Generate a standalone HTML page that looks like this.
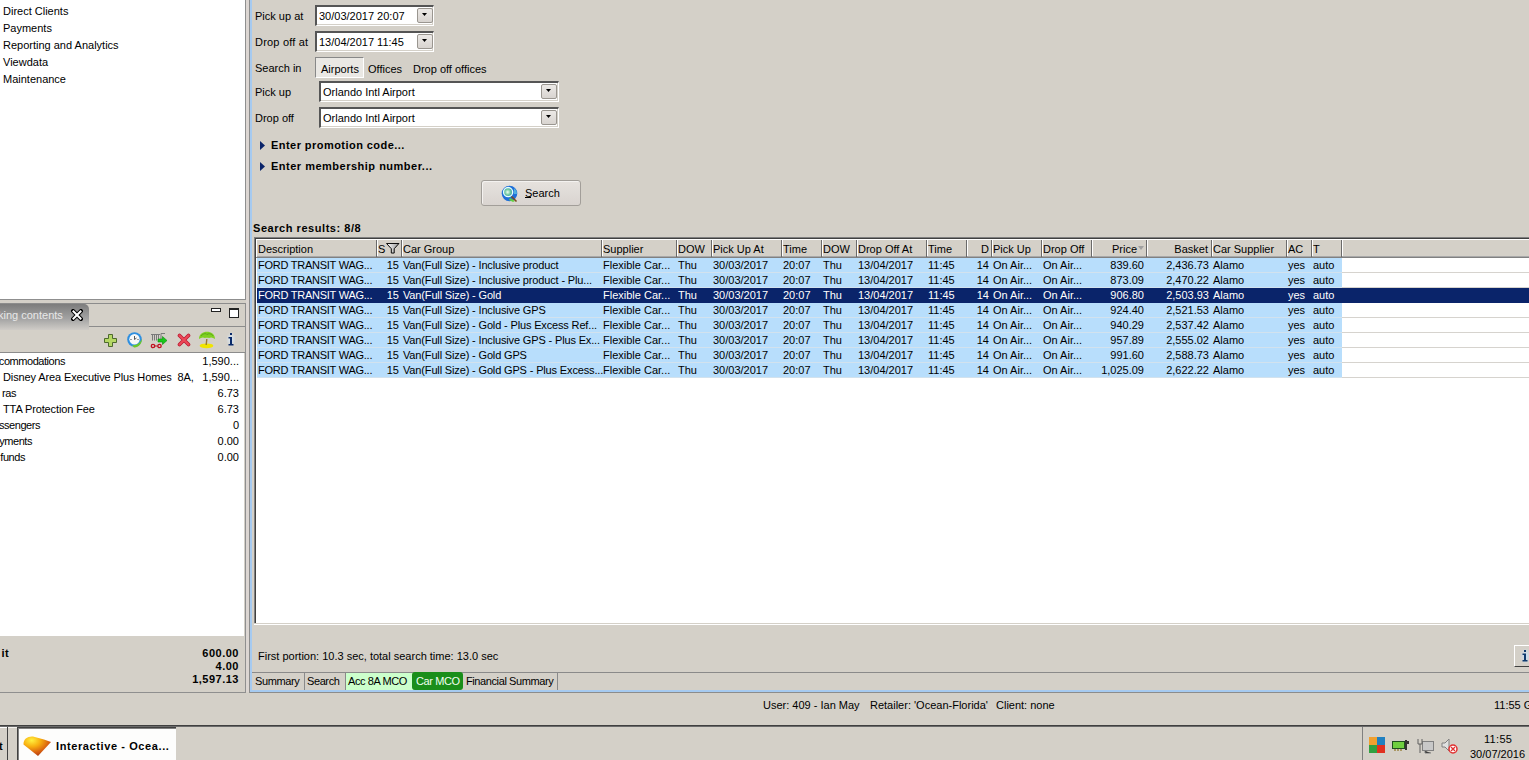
<!DOCTYPE html><html><head><meta charset="utf-8"><style>
*{margin:0;padding:0;box-sizing:border-box}
html,body{width:1529px;height:760px;overflow:hidden;background:#D4D0C8;font-family:"Liberation Sans",sans-serif;font-size:11px;color:#000}
.r{position:absolute}
.t{position:absolute;line-height:13px;white-space:pre;font-size:11px}
.b{font-weight:bold;letter-spacing:0.35px}
</style></head><body><div class="r" style="left:0px;top:0px;width:245px;height:299px;background:#fff"></div>
<div class="r" style="left:245px;top:0px;width:1px;height:300px;background:#8f8f8f"></div>
<div class="r" style="left:0px;top:299px;width:245px;height:1px;background:#8f8f8f"></div>
<div class="r" style="left:246px;top:0px;width:3px;height:692px;background:#DCD6D2"></div>
<div class="t " style="left:3px;top:5px;">Direct Clients</div>
<div class="t " style="left:3px;top:22px;">Payments</div>
<div class="t " style="left:3px;top:39px;">Reporting and Analytics</div>
<div class="t " style="left:3px;top:56px;">Viewdata</div>
<div class="t " style="left:3px;top:73px;">Maintenance</div>
<div class="r" style="left:0px;top:303px;width:245px;height:390px;background:#D4D0C8"></div>
<div class="r" style="left:0px;top:303px;width:245px;height:1px;background:#8c8c8c"></div>
<div class="r" style="left:245px;top:303px;width:1px;height:390px;background:#8f8f8f"></div>
<div class="r" style="left:0px;top:692px;width:246px;height:1px;background:#8f8f8f"></div>
<div class="r" style="left:0px;top:304px;width:89px;height:26px;background:linear-gradient(#7c7c7c,#a2a2a2 55%,#cfccc7);border-top-right-radius:5px"></div>
<div class="t " style="left:-2px;top:309px;color:#e8e8e8">king contents</div>
<svg class="r" style="left:71px;top:309px" width="12" height="12" viewBox="0 0 12 12"><path d="M2 2L10 10M10 2L2 10" stroke="#000" stroke-width="4" stroke-linecap="square"/><path d="M2.5 2.5L9.5 9.5M9.5 2.5L2.5 9.5" stroke="#fff" stroke-width="2" stroke-linecap="square"/></svg>
<div class="r" style="left:89px;top:326px;width:156px;height:1px;background:#8c8c8c"></div>
<div class="r" style="left:89px;top:326px;width:0px;height:0px;"></div>
<div class="r" style="left:211px;top:308px;width:10px;height:4px;border:1px solid #222;background:#fff"></div>
<div class="r" style="left:229px;top:308px;width:10px;height:10px;border:1px solid #222;border-top-width:2px;background:#fff"></div>
<div class="r" style="left:0px;top:352px;width:245px;height:1px;background:#8c8c8c"></div>
<svg class="r" style="left:104px;top:333px" width="14" height="14" viewBox="0 0 14 14"><path d="M4.5 1.5h4v4h4v4h-4v4h-4v-4h-4v-4h4z" fill="#B5D865" stroke="#4E6A2E" stroke-width="1"/></svg>
<svg class="r" style="left:126px;top:331px" width="18" height="18" viewBox="0 0 18 18"><circle cx="8.5" cy="8.5" r="7.3" fill="#2E8FE0"/><circle cx="8.5" cy="8.3" r="5.2" fill="#F8F8F8"/><path d="M8.5 5V8.5L10.5 7" stroke="#555" stroke-width="1" fill="none"/><circle cx="5" cy="8.5" r="0.6" fill="#333"/><circle cx="12" cy="8.5" r="0.6" fill="#333"/><path d="M6 14C10 15 14 12 16 8C16 13 12 17 8 16.5z" fill="#6CC828"/></svg>
<svg class="r" style="left:150px;top:331px" width="18" height="18" viewBox="0 0 18 18"><path d="M1 3.5h9M2.5 3.5v6M4.5 3.5v6M6.5 3.5v6M8.5 3.5v5M11 2.5h4M11 2.5v6" stroke="#7a7a7a" stroke-width="1" fill="none"/><circle cx="3" cy="15" r="1.7" fill="none" stroke="#C01020" stroke-width="1.3"/><circle cx="9.5" cy="15" r="1.7" fill="none" stroke="#C01020" stroke-width="1.3"/><path d="M4.7 15h3" stroke="#C01020"/><path d="M8 8h4.5V5.5l4.5 4-4.5 4V11H8z" fill="#18C818" stroke="#0a8a0a" stroke-width="0.6"/></svg>
<svg class="r" style="left:177px;top:333px" width="14" height="14" viewBox="0 0 14 14"><path d="M2.5 2.5L11.5 11.5M11.5 2.5L2.5 11.5" stroke="#B81830" stroke-width="3.6" stroke-linecap="round"/><path d="M2.5 2.5L11.5 11.5M11.5 2.5L2.5 11.5" stroke="#EC4858" stroke-width="2.2" stroke-linecap="round"/></svg>
<svg class="r" style="left:198px;top:331px" width="18" height="18" viewBox="0 0 18 18"><ellipse cx="8.5" cy="14.8" rx="6.8" ry="2.4" fill="#F0E400"/><path d="M8.8 8L8.2 14" stroke="#9A7A30" stroke-width="1.4"/><path d="M1 8C1 3 5 0.8 9 0.8C13 0.8 17 3 17 8C15 6.5 13 6 11 7C10 6.5 8 6.5 7 7C5 6 3 6.5 1 8z" fill="#80D020"/><path d="M3 5C5 2.5 8 2 9 3.5C11 2 14 3 15 5" stroke="#58A818" stroke-width="1" fill="none"/></svg>
<div class="r" style="left:226px;top:332px;width:10px;height:15px;background:radial-gradient(#D8E8F8,transparent 70%)"></div>
<svg class="r" style="left:228px;top:333px" width="6" height="13" viewBox="0 0 6 13"><rect x="2" y="0" width="2" height="2" fill="#0A2A6A"/><path d="M0.5 4h3.5v7h1.5v1.5h-5V11h1.5V5.5h-1.5z" fill="#0A2A6A"/></svg>
<div class="r" style="left:0px;top:353px;width:244px;height:283px;background:#fff"></div>
<div class="t " style="left:-135px;top:355px;width:200px;text-align:right;letter-spacing:-0.45px">ccommodations</div>
<div class="t " style="left:150px;top:355px;width:89px;text-align:right;">1,590...</div>
<div class="t " style="left:3px;top:371px;letter-spacing:-0.12px">Disney Area Executive Plus Homes  8A,</div>
<div class="t " style="left:150px;top:371px;width:89px;text-align:right;">1,590...</div>
<div class="t " style="left:-184px;top:387px;width:200px;text-align:right;letter-spacing:-0.45px">ras</div>
<div class="t " style="left:150px;top:387px;width:89px;text-align:right;">6.73</div>
<div class="t " style="left:3px;top:403px;letter-spacing:-0.12px">TTA Protection Fee</div>
<div class="t " style="left:150px;top:403px;width:89px;text-align:right;">6.73</div>
<div class="t " style="left:-160px;top:419px;width:200px;text-align:right;letter-spacing:-0.45px">ssengers</div>
<div class="t " style="left:150px;top:419px;width:89px;text-align:right;">0</div>
<div class="t " style="left:-168px;top:435px;width:200px;text-align:right;letter-spacing:-0.45px">yments</div>
<div class="t " style="left:150px;top:435px;width:89px;text-align:right;">0.00</div>
<div class="t " style="left:-175px;top:451px;width:200px;text-align:right;letter-spacing:-0.45px">funds</div>
<div class="t " style="left:150px;top:451px;width:89px;text-align:right;">0.00</div>
<div class="t b" style="left:-191px;top:647px;width:200px;text-align:right;">it</div>
<div class="t b" style="left:150px;top:647px;width:89px;text-align:right;letter-spacing:0.5px">600.00</div>
<div class="t b" style="left:150px;top:660px;width:89px;text-align:right;letter-spacing:0.5px">4.00</div>
<div class="t b" style="left:150px;top:673px;width:89px;text-align:right;letter-spacing:0.5px">1,597.13</div>
<div class="r" style="left:249px;top:0px;width:1px;height:693px;background:#8c8c8c"></div>
<div class="r" style="left:250px;top:0px;width:2px;height:692px;background:#A6CAF0"></div>
<div class="r" style="left:250px;top:690px;width:1279px;height:2px;background:#A6CAF0"></div>
<div class="r" style="left:249px;top:692px;width:1280px;height:1px;background:#8c8c8c"></div>
<div class="t " style="left:255px;top:10px;">Pick up at</div>
<div class="r" style="left:315px;top:5px;width:119px;height:21px;background:#fff;border-top:2px solid #555;border-left:2px solid #555;border-bottom:1px solid #fff;border-right:1px solid #fff;box-shadow:inset -1px -1px 0 #D4D0C8"></div>
<div class="t " style="left:319px;top:10px;">30/03/2017 20:07</div>
<div class="r" style="left:417px;top:8px;width:16px;height:15px;background:linear-gradient(#ECE9E6,#D8D4D0);border:1px solid #9a9690;border-radius:2px"></div>
<svg class="r" style="left:422px;top:13px" width="5" height="3" viewBox="0 0 5 3"><path d="M0 0h5L2.5 3z" fill="#000"/></svg>
<div class="t " style="left:255px;top:36px;letter-spacing:0.2px">Drop off at</div>
<div class="r" style="left:315px;top:31px;width:119px;height:21px;background:#fff;border-top:2px solid #555;border-left:2px solid #555;border-bottom:1px solid #fff;border-right:1px solid #fff;box-shadow:inset -1px -1px 0 #D4D0C8"></div>
<div class="t " style="left:319px;top:36px;">13/04/2017 11:45</div>
<div class="r" style="left:417px;top:34px;width:16px;height:15px;background:linear-gradient(#ECE9E6,#D8D4D0);border:1px solid #9a9690;border-radius:2px"></div>
<svg class="r" style="left:422px;top:39px" width="5" height="3" viewBox="0 0 5 3"><path d="M0 0h5L2.5 3z" fill="#000"/></svg>
<div class="t " style="left:255px;top:62px;">Search in</div>
<div class="r" style="left:315px;top:57px;width:49px;height:21px;background:#EAE8E4;border-top:1px solid #888;border-left:1px solid #888;border-bottom:1px solid #fff;border-right:1px solid #fff"></div>
<div class="t " style="left:321px;top:63px;">Airports</div>
<div class="t " style="left:368px;top:63px;">Offices</div>
<div class="t " style="left:413px;top:63px;">Drop off offices</div>
<div class="t " style="left:255px;top:86px;">Pick up</div>
<div class="r" style="left:319px;top:81px;width:240px;height:21px;background:#fff;border-top:2px solid #555;border-left:2px solid #555;border-bottom:1px solid #fff;border-right:1px solid #fff;box-shadow:inset -1px -1px 0 #D4D0C8"></div>
<div class="t " style="left:323px;top:86px;">Orlando Intl Airport</div>
<div class="r" style="left:541px;top:84px;width:16px;height:15px;background:linear-gradient(#ECE9E6,#D8D4D0);border:1px solid #9a9690;border-radius:2px"></div>
<svg class="r" style="left:546px;top:89px" width="5" height="3" viewBox="0 0 5 3"><path d="M0 0h5L2.5 3z" fill="#000"/></svg>
<div class="t " style="left:255px;top:112px;">Drop off</div>
<div class="r" style="left:319px;top:107px;width:240px;height:21px;background:#fff;border-top:2px solid #555;border-left:2px solid #555;border-bottom:1px solid #fff;border-right:1px solid #fff;box-shadow:inset -1px -1px 0 #D4D0C8"></div>
<div class="t " style="left:323px;top:112px;">Orlando Intl Airport</div>
<div class="r" style="left:541px;top:110px;width:16px;height:15px;background:linear-gradient(#ECE9E6,#D8D4D0);border:1px solid #9a9690;border-radius:2px"></div>
<svg class="r" style="left:546px;top:115px" width="5" height="3" viewBox="0 0 5 3"><path d="M0 0h5L2.5 3z" fill="#000"/></svg>
<svg class="r" style="left:260px;top:141px" width="5" height="9" viewBox="0 0 5 9"><path d="M0 0L5 4.5L0 9z" fill="#0A246A"/></svg>
<div class="t b" style="left:271px;top:139px;letter-spacing:0.45px">Enter promotion code...</div>
<svg class="r" style="left:260px;top:162px" width="5" height="9" viewBox="0 0 5 9"><path d="M0 0L5 4.5L0 9z" fill="#0A246A"/></svg>
<div class="t b" style="left:271px;top:160px;letter-spacing:0.5px">Enter membership number...</div>
<div class="r" style="left:481px;top:180px;width:100px;height:26px;background:linear-gradient(#E6E2DE,#D9D4D0);border:1px solid #A29E99;border-radius:3px;box-shadow:inset 1px 1px 0 #F4F2F0"></div>
<svg class="r" style="left:498px;top:182px" width="24" height="24" viewBox="0 0 24 24"><defs><radialGradient id="gl" cx="0.45" cy="0.5" r="0.6"><stop offset="0" stop-color="#f0fff0"/><stop offset="0.5" stop-color="#70c8a0"/><stop offset="1" stop-color="#2a90b0"/></radialGradient></defs><circle cx="11.5" cy="11.5" r="7.8" fill="#1f6fd8"/><path d="M16 6A7.8 7.8 0 0 1 19 12L16 12z" fill="#50b0e0"/><path d="M12 16L17 19L15 20L11 18z" fill="#60d040"/><circle cx="10.1" cy="10.1" r="4.6" fill="url(#gl)" stroke="#e8ffff" stroke-width="1.3"/><path d="M13.5 14.5L18.5 19.5" stroke="#7a4a20" stroke-width="1.6"/></svg>
<div class="t " style="left:525px;top:187px;">Search</div>
<div class="r" style="left:525px;top:197px;width:6px;height:1px;background:#000"></div>
<div class="t b" style="left:253px;top:222px;letter-spacing:0.55px">Search results: 8/8</div>
<div class="r" style="left:254px;top:237px;width:1275px;height:388px;background:#fff;border-top:1px solid #808080;border-left:1px solid #808080;"></div>
<div class="r" style="left:255px;top:238px;width:1274px;height:1px;background:#404040"></div>
<div class="r" style="left:255px;top:238px;width:1px;height:385px;background:#404040"></div>
<div class="r" style="left:254px;top:623px;width:1275px;height:1px;background:#D4D0C8"></div>
<div class="r" style="left:254px;top:624px;width:1275px;height:1px;background:#fff"></div>
<div class="r" style="left:256px;top:239px;width:1273px;height:19px;background:#D4D0C8"></div>
<div class="r" style="left:256px;top:239px;width:1273px;height:1px;background:#fff"></div>
<div class="r" style="left:256px;top:256px;width:1273px;height:1px;background:#A8A8A8"></div>
<div class="r" style="left:256px;top:257px;width:1273px;height:1px;background:#808080"></div>
<div class="r" style="left:256px;top:239px;width:1px;height:18px;background:#fff"></div>
<div class="r" style="left:376px;top:240px;width:1px;height:17px;background:#6a6a6a"></div>
<div class="r" style="left:377px;top:240px;width:1px;height:16px;background:#fff"></div>
<div class="r" style="left:401px;top:240px;width:1px;height:17px;background:#6a6a6a"></div>
<div class="r" style="left:402px;top:240px;width:1px;height:16px;background:#fff"></div>
<div class="r" style="left:601px;top:240px;width:1px;height:17px;background:#6a6a6a"></div>
<div class="r" style="left:602px;top:240px;width:1px;height:16px;background:#fff"></div>
<div class="r" style="left:676px;top:240px;width:1px;height:17px;background:#6a6a6a"></div>
<div class="r" style="left:677px;top:240px;width:1px;height:16px;background:#fff"></div>
<div class="r" style="left:711px;top:240px;width:1px;height:17px;background:#6a6a6a"></div>
<div class="r" style="left:712px;top:240px;width:1px;height:16px;background:#fff"></div>
<div class="r" style="left:781px;top:240px;width:1px;height:17px;background:#6a6a6a"></div>
<div class="r" style="left:782px;top:240px;width:1px;height:16px;background:#fff"></div>
<div class="r" style="left:821px;top:240px;width:1px;height:17px;background:#6a6a6a"></div>
<div class="r" style="left:822px;top:240px;width:1px;height:16px;background:#fff"></div>
<div class="r" style="left:856px;top:240px;width:1px;height:17px;background:#6a6a6a"></div>
<div class="r" style="left:857px;top:240px;width:1px;height:16px;background:#fff"></div>
<div class="r" style="left:926px;top:240px;width:1px;height:17px;background:#6a6a6a"></div>
<div class="r" style="left:927px;top:240px;width:1px;height:16px;background:#fff"></div>
<div class="r" style="left:966px;top:240px;width:1px;height:17px;background:#6a6a6a"></div>
<div class="r" style="left:967px;top:240px;width:1px;height:16px;background:#fff"></div>
<div class="r" style="left:991px;top:240px;width:1px;height:17px;background:#6a6a6a"></div>
<div class="r" style="left:992px;top:240px;width:1px;height:16px;background:#fff"></div>
<div class="r" style="left:1041px;top:240px;width:1px;height:17px;background:#6a6a6a"></div>
<div class="r" style="left:1042px;top:240px;width:1px;height:16px;background:#fff"></div>
<div class="r" style="left:1091px;top:240px;width:1px;height:17px;background:#6a6a6a"></div>
<div class="r" style="left:1092px;top:240px;width:1px;height:16px;background:#fff"></div>
<div class="r" style="left:1146px;top:240px;width:1px;height:17px;background:#6a6a6a"></div>
<div class="r" style="left:1147px;top:240px;width:1px;height:16px;background:#fff"></div>
<div class="r" style="left:1211px;top:240px;width:1px;height:17px;background:#6a6a6a"></div>
<div class="r" style="left:1212px;top:240px;width:1px;height:16px;background:#fff"></div>
<div class="r" style="left:1286px;top:240px;width:1px;height:17px;background:#6a6a6a"></div>
<div class="r" style="left:1287px;top:240px;width:1px;height:16px;background:#fff"></div>
<div class="r" style="left:1311px;top:240px;width:1px;height:17px;background:#6a6a6a"></div>
<div class="r" style="left:1312px;top:240px;width:1px;height:16px;background:#fff"></div>
<div class="r" style="left:1341px;top:240px;width:1px;height:17px;background:#6a6a6a"></div>
<div class="r" style="left:1342px;top:240px;width:1px;height:16px;background:#fff"></div>
<div class="t " style="left:258px;top:243px;">Description</div>
<div class="t " style="left:378px;top:243px;">S</div>
<div class="t " style="left:403px;top:243px;">Car Group</div>
<div class="t " style="left:603px;top:243px;">Supplier</div>
<div class="t " style="left:678px;top:243px;">DOW</div>
<div class="t " style="left:713px;top:243px;">Pick Up At</div>
<div class="t " style="left:783px;top:243px;">Time</div>
<div class="t " style="left:823px;top:243px;">DOW</div>
<div class="t " style="left:858px;top:243px;">Drop Off At</div>
<div class="t " style="left:928px;top:243px;">Time</div>
<div class="t " style="left:967px;top:243px;width:22px;text-align:right;">D</div>
<div class="t " style="left:993px;top:243px;">Pick Up</div>
<div class="t " style="left:1043px;top:243px;">Drop Off</div>
<div class="t " style="left:1092px;top:243px;width:45px;text-align:right;">Price</div>
<svg class="r" style="left:1138px;top:246px" width="6" height="4" viewBox="0 0 6 4"><path d="M0 0h6L3 4z" fill="#a0a0a0"/></svg>
<div class="t " style="left:1147px;top:243px;width:61px;text-align:right;">Basket</div>
<div class="t " style="left:1213px;top:243px;">Car Supplier</div>
<div class="t " style="left:1288px;top:243px;">AC</div>
<div class="t " style="left:1313px;top:243px;">T</div>
<svg class="r" style="left:386px;top:243px" width="14" height="11" viewBox="0 0 14.5 11.5"><defs><linearGradient id="fg" x1="0" x2="1"><stop offset="0" stop-color="#fff"/><stop offset="1" stop-color="#999"/></linearGradient></defs><path d="M0.5 0.5h13L8.5 6v4.5h-3V6z" fill="url(#fg)" stroke="#000" stroke-width="1"/></svg>
<div class="r" style="left:257px;top:258px;width:1085px;height:14px;background:#B8DEFC"></div>
<div class="r" style="left:257px;top:272px;width:1085px;height:1px;background:#D2E2EE"></div>
<div class="r" style="left:1342px;top:272px;width:187px;height:1px;background:#D6D3CE"></div>
<div class="t " style="left:258px;top:259px;letter-spacing:-0.25px;">FORD TRANSIT WAG...</div>
<div class="t " style="left:377px;top:259px;width:22px;text-align:right;">15</div>
<div class="t " style="left:403px;top:259px;letter-spacing:-0.15px;">Van(Full Size) - Inclusive product</div>
<div class="t " style="left:603px;top:259px;">Flexible Car...</div>
<div class="t " style="left:678px;top:259px;">Thu</div>
<div class="t " style="left:713px;top:259px;">30/03/2017</div>
<div class="t " style="left:783px;top:259px;">20:07</div>
<div class="t " style="left:823px;top:259px;">Thu</div>
<div class="t " style="left:858px;top:259px;">13/04/2017</div>
<div class="t " style="left:928px;top:259px;">11:45</div>
<div class="t " style="left:967px;top:259px;width:22px;text-align:right;">14</div>
<div class="t " style="left:993px;top:259px;">On Air...</div>
<div class="t " style="left:1043px;top:259px;">On Air...</div>
<div class="t " style="left:1092px;top:259px;width:52px;text-align:right;">839.60</div>
<div class="t " style="left:1147px;top:259px;width:62px;text-align:right;">2,436.73</div>
<div class="t " style="left:1213px;top:259px;">Alamo</div>
<div class="t " style="left:1288px;top:259px;">yes</div>
<div class="t " style="left:1313px;top:259px;">auto</div>
<div class="r" style="left:257px;top:273px;width:1085px;height:14px;background:#B8DEFC"></div>
<div class="r" style="left:257px;top:287px;width:1085px;height:1px;background:#D2E2EE"></div>
<div class="r" style="left:1342px;top:287px;width:187px;height:1px;background:#D6D3CE"></div>
<div class="t " style="left:258px;top:274px;letter-spacing:-0.25px;">FORD TRANSIT WAG...</div>
<div class="t " style="left:377px;top:274px;width:22px;text-align:right;">15</div>
<div class="t " style="left:403px;top:274px;letter-spacing:-0.15px;">Van(Full Size) - Inclusive product - Plu...</div>
<div class="t " style="left:603px;top:274px;">Flexible Car...</div>
<div class="t " style="left:678px;top:274px;">Thu</div>
<div class="t " style="left:713px;top:274px;">30/03/2017</div>
<div class="t " style="left:783px;top:274px;">20:07</div>
<div class="t " style="left:823px;top:274px;">Thu</div>
<div class="t " style="left:858px;top:274px;">13/04/2017</div>
<div class="t " style="left:928px;top:274px;">11:45</div>
<div class="t " style="left:967px;top:274px;width:22px;text-align:right;">14</div>
<div class="t " style="left:993px;top:274px;">On Air...</div>
<div class="t " style="left:1043px;top:274px;">On Air...</div>
<div class="t " style="left:1092px;top:274px;width:52px;text-align:right;">873.09</div>
<div class="t " style="left:1147px;top:274px;width:62px;text-align:right;">2,470.22</div>
<div class="t " style="left:1213px;top:274px;">Alamo</div>
<div class="t " style="left:1288px;top:274px;">yes</div>
<div class="t " style="left:1313px;top:274px;">auto</div>
<div class="r" style="left:257px;top:288px;width:1272px;height:15px;background:#0A246A"></div>
<div class="t " style="left:258px;top:289px;color:#fff;letter-spacing:-0.25px;">FORD TRANSIT WAG...</div>
<div class="t " style="left:377px;top:289px;width:22px;text-align:right;color:#fff;">15</div>
<div class="t " style="left:403px;top:289px;color:#fff;letter-spacing:-0.15px;">Van(Full Size) - Gold</div>
<div class="t " style="left:603px;top:289px;color:#fff;">Flexible Car...</div>
<div class="t " style="left:678px;top:289px;color:#fff;">Thu</div>
<div class="t " style="left:713px;top:289px;color:#fff;">30/03/2017</div>
<div class="t " style="left:783px;top:289px;color:#fff;">20:07</div>
<div class="t " style="left:823px;top:289px;color:#fff;">Thu</div>
<div class="t " style="left:858px;top:289px;color:#fff;">13/04/2017</div>
<div class="t " style="left:928px;top:289px;color:#fff;">11:45</div>
<div class="t " style="left:967px;top:289px;width:22px;text-align:right;color:#fff;">14</div>
<div class="t " style="left:993px;top:289px;color:#fff;">On Air...</div>
<div class="t " style="left:1043px;top:289px;color:#fff;">On Air...</div>
<div class="t " style="left:1092px;top:289px;width:52px;text-align:right;color:#fff;">906.80</div>
<div class="t " style="left:1147px;top:289px;width:62px;text-align:right;color:#fff;">2,503.93</div>
<div class="t " style="left:1213px;top:289px;color:#fff;">Alamo</div>
<div class="t " style="left:1288px;top:289px;color:#fff;">yes</div>
<div class="t " style="left:1313px;top:289px;color:#fff;">auto</div>
<div class="r" style="left:257px;top:303px;width:1085px;height:14px;background:#B8DEFC"></div>
<div class="r" style="left:257px;top:317px;width:1085px;height:1px;background:#D2E2EE"></div>
<div class="r" style="left:1342px;top:317px;width:187px;height:1px;background:#D6D3CE"></div>
<div class="t " style="left:258px;top:304px;letter-spacing:-0.25px;">FORD TRANSIT WAG...</div>
<div class="t " style="left:377px;top:304px;width:22px;text-align:right;">15</div>
<div class="t " style="left:403px;top:304px;letter-spacing:-0.15px;">Van(Full Size) - Inclusive GPS</div>
<div class="t " style="left:603px;top:304px;">Flexible Car...</div>
<div class="t " style="left:678px;top:304px;">Thu</div>
<div class="t " style="left:713px;top:304px;">30/03/2017</div>
<div class="t " style="left:783px;top:304px;">20:07</div>
<div class="t " style="left:823px;top:304px;">Thu</div>
<div class="t " style="left:858px;top:304px;">13/04/2017</div>
<div class="t " style="left:928px;top:304px;">11:45</div>
<div class="t " style="left:967px;top:304px;width:22px;text-align:right;">14</div>
<div class="t " style="left:993px;top:304px;">On Air...</div>
<div class="t " style="left:1043px;top:304px;">On Air...</div>
<div class="t " style="left:1092px;top:304px;width:52px;text-align:right;">924.40</div>
<div class="t " style="left:1147px;top:304px;width:62px;text-align:right;">2,521.53</div>
<div class="t " style="left:1213px;top:304px;">Alamo</div>
<div class="t " style="left:1288px;top:304px;">yes</div>
<div class="t " style="left:1313px;top:304px;">auto</div>
<div class="r" style="left:257px;top:318px;width:1085px;height:14px;background:#B8DEFC"></div>
<div class="r" style="left:257px;top:332px;width:1085px;height:1px;background:#D2E2EE"></div>
<div class="r" style="left:1342px;top:332px;width:187px;height:1px;background:#D6D3CE"></div>
<div class="t " style="left:258px;top:319px;letter-spacing:-0.25px;">FORD TRANSIT WAG...</div>
<div class="t " style="left:377px;top:319px;width:22px;text-align:right;">15</div>
<div class="t " style="left:403px;top:319px;letter-spacing:-0.15px;">Van(Full Size) - Gold - Plus Excess Ref...</div>
<div class="t " style="left:603px;top:319px;">Flexible Car...</div>
<div class="t " style="left:678px;top:319px;">Thu</div>
<div class="t " style="left:713px;top:319px;">30/03/2017</div>
<div class="t " style="left:783px;top:319px;">20:07</div>
<div class="t " style="left:823px;top:319px;">Thu</div>
<div class="t " style="left:858px;top:319px;">13/04/2017</div>
<div class="t " style="left:928px;top:319px;">11:45</div>
<div class="t " style="left:967px;top:319px;width:22px;text-align:right;">14</div>
<div class="t " style="left:993px;top:319px;">On Air...</div>
<div class="t " style="left:1043px;top:319px;">On Air...</div>
<div class="t " style="left:1092px;top:319px;width:52px;text-align:right;">940.29</div>
<div class="t " style="left:1147px;top:319px;width:62px;text-align:right;">2,537.42</div>
<div class="t " style="left:1213px;top:319px;">Alamo</div>
<div class="t " style="left:1288px;top:319px;">yes</div>
<div class="t " style="left:1313px;top:319px;">auto</div>
<div class="r" style="left:257px;top:333px;width:1085px;height:14px;background:#B8DEFC"></div>
<div class="r" style="left:257px;top:347px;width:1085px;height:1px;background:#D2E2EE"></div>
<div class="r" style="left:1342px;top:347px;width:187px;height:1px;background:#D6D3CE"></div>
<div class="t " style="left:258px;top:334px;letter-spacing:-0.25px;">FORD TRANSIT WAG...</div>
<div class="t " style="left:377px;top:334px;width:22px;text-align:right;">15</div>
<div class="t " style="left:403px;top:334px;letter-spacing:-0.15px;">Van(Full Size) - Inclusive GPS - Plus Ex...</div>
<div class="t " style="left:603px;top:334px;">Flexible Car...</div>
<div class="t " style="left:678px;top:334px;">Thu</div>
<div class="t " style="left:713px;top:334px;">30/03/2017</div>
<div class="t " style="left:783px;top:334px;">20:07</div>
<div class="t " style="left:823px;top:334px;">Thu</div>
<div class="t " style="left:858px;top:334px;">13/04/2017</div>
<div class="t " style="left:928px;top:334px;">11:45</div>
<div class="t " style="left:967px;top:334px;width:22px;text-align:right;">14</div>
<div class="t " style="left:993px;top:334px;">On Air...</div>
<div class="t " style="left:1043px;top:334px;">On Air...</div>
<div class="t " style="left:1092px;top:334px;width:52px;text-align:right;">957.89</div>
<div class="t " style="left:1147px;top:334px;width:62px;text-align:right;">2,555.02</div>
<div class="t " style="left:1213px;top:334px;">Alamo</div>
<div class="t " style="left:1288px;top:334px;">yes</div>
<div class="t " style="left:1313px;top:334px;">auto</div>
<div class="r" style="left:257px;top:348px;width:1085px;height:14px;background:#B8DEFC"></div>
<div class="r" style="left:257px;top:362px;width:1085px;height:1px;background:#D2E2EE"></div>
<div class="r" style="left:1342px;top:362px;width:187px;height:1px;background:#D6D3CE"></div>
<div class="t " style="left:258px;top:349px;letter-spacing:-0.25px;">FORD TRANSIT WAG...</div>
<div class="t " style="left:377px;top:349px;width:22px;text-align:right;">15</div>
<div class="t " style="left:403px;top:349px;letter-spacing:-0.15px;">Van(Full Size) - Gold GPS</div>
<div class="t " style="left:603px;top:349px;">Flexible Car...</div>
<div class="t " style="left:678px;top:349px;">Thu</div>
<div class="t " style="left:713px;top:349px;">30/03/2017</div>
<div class="t " style="left:783px;top:349px;">20:07</div>
<div class="t " style="left:823px;top:349px;">Thu</div>
<div class="t " style="left:858px;top:349px;">13/04/2017</div>
<div class="t " style="left:928px;top:349px;">11:45</div>
<div class="t " style="left:967px;top:349px;width:22px;text-align:right;">14</div>
<div class="t " style="left:993px;top:349px;">On Air...</div>
<div class="t " style="left:1043px;top:349px;">On Air...</div>
<div class="t " style="left:1092px;top:349px;width:52px;text-align:right;">991.60</div>
<div class="t " style="left:1147px;top:349px;width:62px;text-align:right;">2,588.73</div>
<div class="t " style="left:1213px;top:349px;">Alamo</div>
<div class="t " style="left:1288px;top:349px;">yes</div>
<div class="t " style="left:1313px;top:349px;">auto</div>
<div class="r" style="left:257px;top:363px;width:1085px;height:14px;background:#B8DEFC"></div>
<div class="r" style="left:257px;top:377px;width:1085px;height:1px;background:#D2E2EE"></div>
<div class="r" style="left:1342px;top:377px;width:187px;height:1px;background:#D6D3CE"></div>
<div class="t " style="left:258px;top:364px;letter-spacing:-0.25px;">FORD TRANSIT WAG...</div>
<div class="t " style="left:377px;top:364px;width:22px;text-align:right;">15</div>
<div class="t " style="left:403px;top:364px;letter-spacing:-0.15px;">Van(Full Size) - Gold GPS - Plus Excess...</div>
<div class="t " style="left:603px;top:364px;">Flexible Car...</div>
<div class="t " style="left:678px;top:364px;">Thu</div>
<div class="t " style="left:713px;top:364px;">30/03/2017</div>
<div class="t " style="left:783px;top:364px;">20:07</div>
<div class="t " style="left:823px;top:364px;">Thu</div>
<div class="t " style="left:858px;top:364px;">13/04/2017</div>
<div class="t " style="left:928px;top:364px;">11:45</div>
<div class="t " style="left:967px;top:364px;width:22px;text-align:right;">14</div>
<div class="t " style="left:993px;top:364px;">On Air...</div>
<div class="t " style="left:1043px;top:364px;">On Air...</div>
<div class="t " style="left:1092px;top:364px;width:52px;text-align:right;">1,025.09</div>
<div class="t " style="left:1147px;top:364px;width:62px;text-align:right;">2,622.22</div>
<div class="t " style="left:1213px;top:364px;">Alamo</div>
<div class="t " style="left:1288px;top:364px;">yes</div>
<div class="t " style="left:1313px;top:364px;">auto</div>
<div class="r" style="left:1514px;top:645px;width:20px;height:22px;background:#D4D0C8;border-top:1px solid #fff;border-left:1px solid #fff;border-bottom:1px solid #404040"></div>
<div class="r" style="left:1520px;top:648px;width:11px;height:16px;background:radial-gradient(#C8E0F8,transparent 70%)"></div>
<svg class="r" style="left:1522px;top:650px" width="6" height="12" viewBox="0 0 6 12"><rect x="2" y="0" width="2" height="2" fill="#0E3A6E"/><path d="M0.5 3.5h3.5v6.5h1.5v1.5h-5V10h1.5V5h-1.5z" fill="#0E3A6E"/></svg>
<div class="t " style="left:258px;top:650px;">First portion: 10.3 sec, total search time: 13.0 sec</div>
<div class="r" style="left:252px;top:672px;width:1277px;height:1px;background:#8a8a8a"></div>
<div class="r" style="left:252px;top:673px;width:306px;height:17px;background:#D4D0C8"></div>
<div class="r" style="left:346px;top:673px;width:67px;height:17px;background:#CCFFCC"></div>
<div class="r" style="left:412px;top:672px;width:51px;height:18px;background:#1A8E1A;border-radius:3px"></div>
<div class="r" style="left:304px;top:673px;width:1px;height:17px;background:#8a8a8a"></div>
<div class="r" style="left:345px;top:673px;width:1px;height:17px;background:#8a8a8a"></div>
<div class="r" style="left:557px;top:673px;width:1px;height:17px;background:#8a8a8a"></div>
<div class="t " style="left:255px;top:675px;letter-spacing:-0.4px;">Summary</div>
<div class="t " style="left:307px;top:675px;letter-spacing:-0.4px;">Search</div>
<div class="t " style="left:348px;top:675px;letter-spacing:-0.4px;">Acc 8A MCO</div>
<div class="t " style="left:416px;top:675px;letter-spacing:-0.4px;color:#F0FFF0">Car MCO</div>
<div class="t " style="left:466px;top:675px;letter-spacing:-0.4px;">Financial Summary</div>
<div class="t " style="left:763px;top:699px;">User: 409 - Ian May</div>
<div class="t " style="left:870px;top:699px;">Retailer: 'Ocean-Florida'</div>
<div class="t " style="left:996px;top:699px;">Client: none</div>
<div class="t " style="left:1494px;top:699px;">11:55 G</div>
<div class="r" style="left:0px;top:725px;width:1529px;height:1px;background:#404040"></div>
<div class="r" style="left:0px;top:726px;width:1529px;height:1px;background:#6a6a6a"></div>
<div class="r" style="left:0px;top:727px;width:1529px;height:33px;background:#D4D0C8"></div>
<div class="t b" style="left:-1px;top:740px;">t</div>
<div class="r" style="left:0px;top:727px;width:7px;height:1px;background:#fff"></div>
<div class="r" style="left:7px;top:727px;width:1px;height:33px;background:#404040"></div>
<div class="r" style="left:8px;top:727px;width:9px;height:1px;background:#F4F2EE"></div>
<div class="r" style="left:17px;top:727px;width:159px;height:33px;background:#FDFDFC;border-top:1px solid #404040;border-left:1px solid #404040;box-shadow:inset 1px 1px 0 #808080"></div>
<svg class="r" style="left:22px;top:735px" width="30" height="22" viewBox="0 0 30 22"><defs><radialGradient id="og" cx="0.3" cy="0.2" r="0.9"><stop offset="0" stop-color="#FFF040"/><stop offset="0.35" stop-color="#F8B010"/><stop offset="0.7" stop-color="#D86010"/><stop offset="1" stop-color="#A03010"/></radialGradient></defs><path d="M1.5 9.5C1 4 6 1 11 1.5L22 4.5L29 7L16 21z" fill="url(#og)"/></svg>
<div class="t b" style="left:56px;top:740px;letter-spacing:0.6px">Interactive - Ocea...</div>
<div class="r" style="left:1362px;top:727px;width:1px;height:33px;background:#808080"></div>
<svg class="r" style="left:1369px;top:737px" width="16" height="16" viewBox="0 0 16 16"><rect x="0" y="0" width="8" height="8" fill="#F0A030"/><rect x="8" y="0" width="8" height="8" fill="#2080C0"/><rect x="0" y="8" width="8" height="8" fill="#30A040"/><rect x="8" y="8" width="8" height="8" fill="#E03020"/></svg>
<svg class="r" style="left:1392px;top:740px" width="17" height="11" viewBox="0 0 17 11"><rect x="0.5" y="1.5" width="12" height="7" fill="#70D040" stroke="#205020"/><path d="M14 0v10M16 1v3" stroke="#000" stroke-width="1.5"/><path d="M3 9v2M6 9v2M9 9v2" stroke="#806000"/></svg>
<svg class="r" style="left:1417px;top:738px" width="17" height="16" viewBox="0 0 17 16"><rect x="5.5" y="3.5" width="11" height="9" fill="#C8C8C8" stroke="#808080"/><path d="M8 13v2h6" stroke="#808080"/><path d="M1 1v5h4V1M3 6v9" stroke="#606060" fill="none"/></svg>
<svg class="r" style="left:1441px;top:739px" width="17" height="15" viewBox="0 0 17 15"><path d="M1 4h3l4-4v12l-4-4H1z" fill="#e0e0e0" stroke="#808080"/><circle cx="12" cy="10" r="4" fill="#fff" stroke="#e03030" stroke-width="1.5"/><path d="M10 8l4 4M14 8l-4 4" stroke="#e03030" stroke-width="1.3"/></svg>
<div class="t " style="left:1484px;top:733px;letter-spacing:0.3px">11:55</div>
<div class="t " style="left:1470px;top:748px;">30/07/2016</div></body></html>
